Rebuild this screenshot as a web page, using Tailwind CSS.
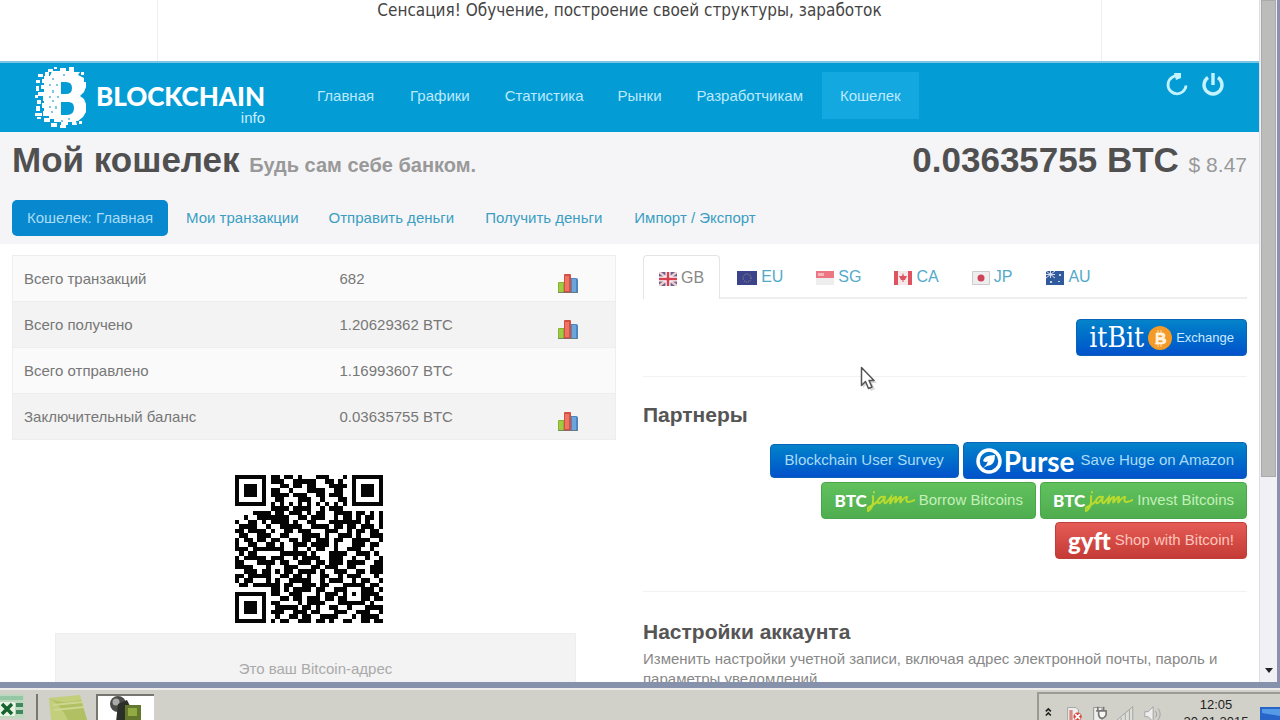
<!DOCTYPE html>
<html lang="ru">
<head>
<meta charset="utf-8">
<meta name="viewport" content="width=device-width, initial-scale=1">
<title>Мой кошелек</title>
<script src="https://cdn.jsdelivr.net/npm/@tailwindcss/browser@4"></script>
</head>
<body class="relative flex h-screen flex-col overflow-hidden bg-white font-['Liberation_Sans',sans-serif] text-[14px] text-[#777]">
<svg class="hidden" aria-hidden="true">
  <symbol id="bars" viewBox="0 0 20 20">
    <path d="M0 9q0-1 1-1h6v11H1q-1 0-1-1z" fill="#84b32f"/><path d="M1 9h4v9H1z" fill="#a3ca42"/>
    <path d="M13 4h5q2 0 2 2v12q0 1-1 1h-6z" fill="#4d85bd"/><path d="M14 5h4v13h-4z" fill="#6ba5da"/>
    <path d="M6 1q0-1 1-1h5q1 0 1 1v18H6z" fill="#d34f43"/><path d="M7 2h4v15H7z" fill="#ee7563"/><path d="M0 18h20v1H0z" fill="#6b7770" opacity=".7"/>
  </symbol>
  <symbol id="jam" viewBox="0 0 48 26">
    <path d="M6 8Q7 20 1 23q-3-2 3-5 6-3 8-7M7 4v.5M18 9q-7-1-7 5 1 4 7-5-2 7 1 6l5-6-1 7q4-8 6-7l-1 6q5-7 6-6l-1 6q5-7 7-6-3 8 8 3" fill="none" stroke="#b9db2d" stroke-width="2" stroke-linecap="round"/>
  </symbol>
</svg>
<div class="flex min-h-0 flex-1 border-b-6 border-[#8691ab]">
  <div class="min-w-0 flex-1 overflow-hidden">
    <div class="h-[61px] px-[157px]">
      <p class="h-full border-x border-[#eeeeee] text-center font-['DejaVu_Sans_Condensed','DejaVu_Sans',sans-serif] text-[17px] leading-[20px] text-[#444]">Сенсация! Обучение, построение своей структуры, заработок</p>
    </div>
    <header class="flex h-[71px] items-center border-t-2 border-[#7cc5e3] bg-[#049cd5] bg-clip-padding text-[#bdeaff]">
      <a href="#" class="ml-[35px] flex w-[230px] shrink-0 items-center gap-2 text-white" aria-label="Blockchain info">
        <svg class="h-[62px] w-[52px] shrink-0" viewBox="0 0 52 62" fill="#fff">
          <path fill-rule="evenodd" d="M17 4h8V1h6v3h3V0h5v5h6l-2 3 6 3v4h2v5l-2 5-4 4 4 3 2 5v8l-3 5-5 4h-2l1 4h-5v-3h-4v3h-7v-3h-7v-3h-5v-3h-5V9h6zM26 15v12h5q6 0 6-6t-6-6zm0 20v13h6q7 0 7-7t-7-6z"/>
          <path d="M3 7h5v3H3zM10 5h4v5h-4zM1 13h4v3H1zM7 12h4v4H7zM1 19h3v5H1zM6 18h6v4H6zM3 25h6v4H3zM0 28h3v3H0zM8 29h5v5H8zM2 33h4v4H2zM7 36h5v5H7zM1 39h4v5H1zM0 46h7v3H0zM8 44h5v5H8zM9 51h6v4H9zM16 56h6v4h-6zM25 58h6v3h-6zM2 50h4v2H2zM13 2h5v3h-5zM44 54h3v3h-3zM19 0h3v2h-3zM46 5h3v3h-3z"/>
          <path d="M17 11h2v2h-2zM21 17h2v2h-2zM17 23h2v3h-2zM22 29h2v2h-2zM17 33h2v2h-2zM20 39h2v3h-2zM16 44h2v2h-2zM28 7h2v2h-2zM26 53h2v2h-2zM33 51h2v2h-2zM14 17h2v2h-2zM14 29h2v2h-2zM14 39h2v2h-2z" fill="#7fc6e4"/>
        </svg>
        <span class="flex flex-1 flex-col items-end pt-3 text-right">
          <span class="font-['Lato','Liberation_Sans',sans-serif] text-[26px] leading-[28px] font-black">BLOCKCHAIN</span>
          <span class="text-[15px] leading-[16px] text-[#c9efff]">info</span>
        </span>
      </a>
      <nav class="mb-1 ml-[34px] flex flex-1 items-center text-[15px] leading-[47px] whitespace-nowrap">
        <a href="#" class="px-[18px]">Главная</a>
        <a href="#" class="px-[18px]">Графики</a>
        <a href="#" class="px-[17px]">Статистика</a>
        <a href="#" class="px-[17px]">Рынки</a>
        <a href="#" class="px-[18px]">Разработчикам</a>
        <a href="#" class="ml-px bg-[#13a8e0] px-[18px]" aria-current="page">Кошелек</a>
      </nav>
      <div class="mr-[34px] flex gap-3 self-start pt-2.5 text-[#c5f2ff]">
        <button aria-label="Обновить"><svg class="size-6" viewBox="0 0 24 24" fill="none" stroke="currentColor" stroke-width="2.8"><path d="M14 3a9 9 0 1 0 7 9.500"/><path d="M9 0h7v5l-5 2z" fill="currentColor" stroke="none"/></svg></button>
        <button aria-label="Выход"><svg class="size-6" viewBox="0 0 24 24" fill="none" stroke="currentColor" stroke-width="3.4"><path d="M7 4.500a9 9 0 1 0 10 0M12 0v12"/></svg></button>
      </div>
    </header>
    <section class="h-[112px] bg-[#f5f5f7] px-3">
      <div class="flex h-14 items-baseline justify-between leading-[56px] font-bold whitespace-nowrap">
        <h1 class="text-[35px] text-[#505050]">Мой кошелек <small class="text-[20px] text-[#999]">Будь сам себе банком.</small></h1>
        <p class="text-[35px] text-[#505050]">0.03635755 BTC <small class="text-[21px] font-normal text-[#999]">$ 8.47</small></p>
      </div>
      <nav class="mt-3 flex items-center text-[15px] leading-[36px] whitespace-nowrap text-[#3a9ec2]">
        <a href="#" class="mr-[3px] rounded-[5px] bg-[#0788cf] px-[15px] text-[#a9dcf5]" aria-current="page">Кошелек: Главная</a>
        <a href="#" class="px-[15px]">Мои транзакции</a>
        <a href="#" class="px-[15px]">Отправить деньги</a>
        <a href="#" class="px-4">Получить деньги</a>
        <a href="#" class="px-4">Импорт / Экспорт</a>
      </nav>
    </section>
    <main class="grid grid-cols-[604px_1fr] gap-[27px] px-3 pt-[11px]">
      <section>
        <table class="w-full table-fixed border-collapse border border-[#eeeeee] text-left text-[15px] leading-[45px]">
          <colgroup><col class="w-[316px]"><col><col class="w-[82px]"></colgroup>
          <tbody>
            <tr class="border-b border-[#eee] bg-[#fafafa]"><th class="pl-[11px] font-normal">Всего транзакций</th><td class="pl-[11px]">682</td><td><svg class="mt-2.5 ml-6 size-5"><use href="#bars"/></svg></td></tr>
            <tr class="border-b border-[#eee] bg-[#f3f3f3]"><th class="pl-[11px] font-normal">Всего получено</th><td class="pl-[11px]">1.20629362 BTC</td><td><svg class="mt-2.5 ml-6 size-5"><use href="#bars"/></svg></td></tr>
            <tr class="border-b border-[#eee] bg-[#fafafa]"><th class="pl-[11px] font-normal">Всего отправлено</th><td class="pl-[11px]">1.16993607 BTC</td><td></td></tr>
            <tr class="bg-[#f3f3f3]"><th class="pl-[11px] font-normal">Заключительный баланс</th><td class="pl-[11px]">0.03635755 BTC</td><td><svg class="mt-2.5 ml-6 size-5"><use href="#bars"/></svg></td></tr>
          </tbody>
        </table>
        <svg id="qr" class="mt-[35px] ml-[223px] size-[148px]" viewBox="0 0 33 33" shape-rendering="crispEdges" role="img" aria-label="QR-код Bitcoin-адреса"></svg>
        <div class="mr-10 ml-[43px] mt-[10px] h-[90px] border border-[#eee] bg-[#f3f3f3] pt-[26px] text-center text-[15px] leading-[18px] text-[#aaa]">Это ваш Bitcoin-адрес</div>
      </section>
      <section>
        <nav class="flex h-[44px] items-end border-b-2 border-[#eeeeee] text-[16px] leading-[40px] text-[#53aac9]">
          <a href="#" class="-mb-0.5 flex h-[44px] items-center gap-1 rounded-t border border-b-0 border-[#e5e5e5] bg-white px-[15px] text-[#888]"><svg class="mt-0.5 h-[14px] w-[18px]" viewBox="0 0 18 14"><path fill="#6c6087" d="M0 0h18v14H0z"/><path stroke="#eccbd1" stroke-width="2.500" d="m0 0 18 14M18 0 0 14"/><path stroke="#fff" stroke-width="5" d="M9 0v14M0 7h18"/><path stroke="#d6404f" stroke-width="2.500" d="M9 0v14M0 7h18"/></svg>GB</a>
          <a href="#" class="flex items-center gap-1 pl-[17px]"><svg class="mt-0.5 h-[14px] w-[20px]" viewBox="0 0 20 14"><path fill="#3d438a" d="M0 0h20v14H0z"/><circle cx="10" cy="7" r="4" fill="none" stroke="#9d9a82" stroke-dasharray="1 1.100"/></svg>EU</a>
          <a href="#" class="flex items-center gap-1 pl-[33px]"><svg class="mt-0.5 h-[14px] w-[18px]" viewBox="0 0 18 14"><path fill="#eee" d="M0 0h18v14H0z"/><path fill="#ec7782" d="M0 0h18v7H0z"/><path fill="#f7b5bb" d="M2 2h6v3H2z"/></svg>SG</a>
          <a href="#" class="flex items-center gap-1 pl-[33px]"><svg class="mt-0.5 h-[14px] w-[18px]" viewBox="0 0 18 14"><path fill="#f4e9e9" d="M0 0h18v14H0z"/><path fill="#df5260" d="M0 0h4v14H0zM14 0h4v14h-4zM9 2l1 3 3 0-2 4H9.500v2h-1V9H7L5 5h3z"/></svg>CA</a>
          <a href="#" class="flex items-center gap-1 pl-[33px]"><svg class="mt-0.5 h-[14px] w-[18px]" viewBox="0 0 18 14"><path fill="#eeeef0" stroke="#ccc" d="M.5.5h17v13H.5z"/><circle cx="9" cy="7" r="3.500" fill="#cf4359"/></svg>JP</a>
          <a href="#" class="flex items-center gap-1 pl-[34px]"><svg class="mt-0.5 h-[14px] w-[18px]" viewBox="0 0 18 14"><path fill="#315a9c" d="M0 0h18v14H0z"/><path stroke="#d9dceb" d="m0 0 9 7M9 0 0 7M4.500 0v7M0 3.500h9"/><path fill="#c2d4eb" d="M13 3h2v2h-2zM4 10h2v2H4zM12 10h2v1h-2z"/></svg>AU</a>
        </nav>
        <div class="flex justify-end pt-5">
          <button class="flex h-[37px] items-center gap-1 rounded-[4px] border border-[#0864b8] bg-linear-to-b from-[#0783c9] to-[#0551cb] px-3 text-[13px] text-[#c8eaff]">
            <span class="font-['DejaVu_Serif_Condensed','DejaVu_Serif',serif] text-[28px] leading-[34px] text-white">itBit</span>
            <svg class="size-6" viewBox="0 0 24 24"><circle cx="12" cy="12" r="12" fill="#f39a27"/><path d="M8 7h6q3 0 3 2.500T15 12q3 .5 3 3t-4 3H7l1-1.500V8zM10 4v3M13 4v3M10 18v3M13 18v3M10 9v2.500h3q1.500 0 1.500-1.200T13 9zM10 14v2.500h3q2 0 2-1.300T13 14z" fill="#fff3df" stroke="#fff3df" stroke-width=".7" fill-rule="evenodd"/></svg>
            <span>Exchange</span>
          </button>
        </div>
        <hr class="mt-5 border-[#f2f2f2]">
        <h2 class="pt-[25px] text-[21px] leading-[26px] font-bold text-[#555]">Партнеры</h2>
        <div class="flex flex-wrap items-center justify-end gap-x-1 gap-y-[3px] pt-[14px] text-[15px] whitespace-nowrap">
          <button class="h-[34px] rounded-[4px] border border-[#0864b8] bg-linear-to-b from-[#0783c9] to-[#0551cb] px-3.5 text-[#aadcf8]">Blockchain User Survey</button>
          <button class="flex h-[37px] items-center gap-1.5 rounded-[4px] border border-[#0864b8] bg-linear-to-b from-[#0783c9] to-[#0551cb] px-3 text-[#aadcf8]">
            <svg class="size-[26px]" viewBox="0 0 26 26" fill="none"><circle cx="13" cy="13" r="11" stroke="#fff" stroke-width="3.500"/><path d="M7 13q1-6 12-6 0 11-8 11l-4 2q4-3 5-7-2 2-5 0z" fill="#fff"/></svg>
            <span class="-ml-1 font-['Lato','Liberation_Sans',sans-serif] text-[28px] leading-[34px] font-bold text-white">Purse</span><span>Save Huge on Amazon</span>
          </button>
          <button class="flex h-[37px] items-center gap-1 rounded-[4px] border border-[#4aa64a] bg-linear-to-b from-[#61c15d] to-[#4fad4f] px-3 text-[#c3f0ba]"><span class="flex items-center"><b class="font-['Lato',sans-serif] text-[17px] font-black text-white">BTC</b><svg class="h-[26px] w-[48px]"><use href="#jam"/></svg></span>Borrow Bitcoins</button>
          <button class="flex h-[37px] items-center gap-1 rounded-[4px] border border-[#4aa64a] bg-linear-to-b from-[#61c15d] to-[#4fad4f] px-3 text-[#c3f0ba]"><span class="flex items-center"><b class="font-['Lato',sans-serif] text-[17px] font-black text-white">BTC</b><svg class="h-[26px] w-[48px]"><use href="#jam"/></svg></span>Invest Bitcoins</button>
          <button class="flex h-[37px] items-center gap-1 rounded-[4px] border border-[#bf3e3a] bg-linear-to-b from-[#e45c55] to-[#c53a36] px-3 text-[#ffc4bb]"><b class="font-['Lato',sans-serif] text-[24px] leading-[28px] font-black text-white">gyft</b>Shop with Bitcoin!</button>
        </div>
        <hr class="mt-8 border-[#f2f2f2]">
        <h2 class="pt-[27px] text-[21px] leading-[26px] font-bold text-[#555]">Настройки аккаунта</h2>
        <p class="pt-1 text-[15px] leading-[20px] text-[#888]">Изменить настройки учетной записи, включая адрес электронной почты, пароль и параметры уведомлений.</p>
      </section>
    </main>
  </div>
  <div class="flex w-[18px] shrink-0 flex-col items-center border-l border-[#dddde2] bg-[#f1f0f4]" aria-hidden="true">
    <div class="h-[477px] w-[15px] border border-[#aaa9ad] bg-[#bcbcba]"></div>
    <svg class="mt-auto mb-2 h-1.5 w-2" viewBox="0 0 8 6"><path d="M0 0h8L4 5z" fill="#222"/></svg>
  </div>
  <div class="w-[3px] shrink-0 bg-[#8f8fad]"></div>
</div>
<footer class="flex h-8 shrink-0 items-stretch overflow-hidden border-t-2 border-[#ececea] bg-[#d1d0c9]">
  <button class="w-[36px]" aria-label="Excel"><svg class="h-[26px] w-[26px]" viewBox="0 0 26 26"><path d="M0 2h24v24H0z" fill="#bcd9bd"/><path d="M0 4h23v4H0z" fill="#96c7a4"/><path d="M0 10h15v14H0z" fill="#e8f4e5"/><path d="m2 12 10 10M12 12 2 22" stroke="#16632d" stroke-width="3.500"/><path d="M16 11h7v4h-7zM16 18h7v4h-7z" fill="#438760"/></svg></button>
  <button class="mt-1 flex w-[60px] border-l-2 border-[#77776f] pl-2.5" aria-label="Проводник"><svg class="h-[26px] w-[40px]" viewBox="0 0 40 26"><path d="M1 4 32 1l7 25H3z" fill="#c3cf7b"/><path d="M1 4q12 7 32 2l6 20H20Q12 10 1 4z" fill="#b1c062"/><path d="m5 11 30-3M6 16l30-3" stroke="#cdd78f" stroke-width="2"/></svg></button>
  <button class="mt-1 flex w-[58px] justify-center border-t-2 border-l-2 border-[#77776f] bg-white" aria-label="Запись видео"><svg class="h-[26px] w-[36px]" viewBox="0 0 36 26"><circle cx="10" cy="8" r="8" fill="#4c4c49"/><circle cx="8" cy="6" r="3.500" fill="#aaa"/><path d="M10 8l9-4 5 10-3 12H8z" fill="#2d3029"/><path d="M17 9h16v15H17z" fill="#63782d"/><path d="M20 12h9v8h-9z" fill="#92aa42"/></svg></button>
  <div class="mt-0.5 ml-auto flex w-[243px] items-start gap-2.5 border-t-2 border-l-2 border-[#9b9b96] pl-1.5">
    <svg class="mt-3 h-[14px] w-2" viewBox="0 0 8 14" fill="none" stroke="#222" stroke-width="2"><path d="m1 5 3-3 3 3M1 10l3-3 3 3"/></svg>
    <svg class="mt-2.5 ml-1 h-[22px] w-[20px]" viewBox="0 0 20 22"><path d="M2 2h10l3 3v17H2z" fill="#eee" stroke="#999"/><path d="M4 5h4v16H4z" fill="#d98984"/><circle cx="14" cy="13" r="5" fill="#d44b44"/><path d="m11 10 6 6m0-6-6 6" stroke="#fff" stroke-width="2"/></svg>
    <svg class="mt-2.5 h-[22px] w-[18px]" viewBox="0 0 18 22"><path d="M2 2h10v19H2z" fill="#eee" stroke="#888"/><path d="M7 1v5M14 1v5M5 6h12v5q-2 4-5 4t-4-4V6" fill="#f7f7f4" stroke="#777" stroke-width="2"/></svg>
    <svg class="mt-2.5 h-[22px] w-[20px]" viewBox="0 0 20 22"><path d="M0 17 19 1v20H0z" fill="#deded9" stroke="#999"/><path d="M5 14v7M10 9v12M15 5v16" stroke="#999"/></svg>
    <svg class="mt-2.5 h-[22px] w-[22px]" viewBox="0 0 22 22" fill="none" stroke="#999"><path d="M1 7h4l6-6v18l-6-6H1z" fill="#eee"/><path d="M14 6q3 4 0 8M17 3q5 7 0 14"/></svg>
    <time class="ml-2.5 w-[68px] shrink-0 pt-0.5 text-center text-[13px] leading-[17px] text-[#222]">12:05<br>20.01.2015</time>
    <svg class="mt-2.5 h-[20px] w-[20px] shrink-0" viewBox="0 0 20 20"><path d="M0 3h20v17H0z" fill="#2765c8"/><path d="M2 5h18v7L2 9z" fill="#559ae7"/></svg>
  </div>
</footer>
<svg class="pointer-events-none absolute top-[366px] left-[860px] h-[26px] w-[18px]" viewBox="0 0 18 26" aria-hidden="true"><path d="M3 3v19l4-4 4 7 4-2-3-6h5z" fill="#000" opacity=".15"/><path d="M1.500 1.500v18l4-4 3 7 3.500-1.500-3-6.500h5z" fill="#fff" stroke="#555" stroke-width="1.500" stroke-linejoin="round"/></svg>
<script>
  const rows = [
    "111111101101101000111000101111111","100000101110011111001101001000001","101110100011011011000111101011101",
    "101110101100100011110011001011101","101110101111011100110111001011101","100000100110001110010001101000001",
    "111111101010101010101010101111111","000000001111011110010111000000000","000011110110111010110011110110101",
    "001001111111001101110010110101101","100110101111010011000111111101001","011110010011111001111011011011101",
    "110111101001101110001110010110110","011001110011000111101001110100111","101101101100110110111011001111001",
    "100110011010011101111010001110110","111011111110010010110010011100100","010110000011111101000111100111010",
    "101111101110010111100111001001001","110001111011001110110111011110011","111100010001110001101110011000111",
    "001110110101101111010011100110111","110111110011011010011001011100010","101100010100111110010111001011001",
    "011011111101100111011000111110110","000000001101011110110011100011101","111111101100111000101110101011110",
    "100000100011011011101101100011011","101110101100001011110001111110100","101110100111110110100110010001111",
    "101110101110011101100011100111001","100000100100110110011110001011110","111111101011001110110100110011011"
  ];
  const path = document.createElementNS("http://www.w3.org/2000/svg", "path");
  path.setAttribute("d", rows.flatMap((r, y) => [...r].map((c, x) => c === "1" ? `M${x} ${y}h1v1h-1z` : "")).join(""));
  path.setAttribute("fill", "#050505");
  document.getElementById("qr").append(path);
</script>
</body>
</html>
